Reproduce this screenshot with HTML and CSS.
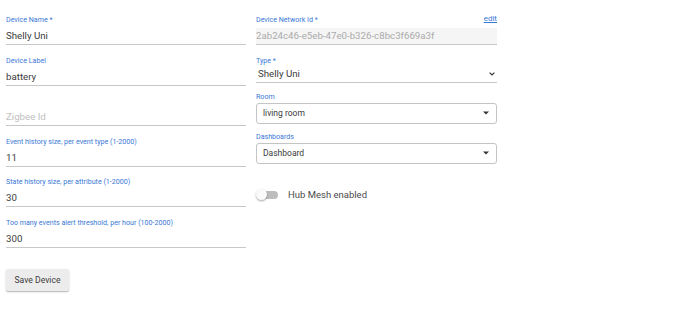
FILE: index.html
```html
<!DOCTYPE html>
<html lang="en">
  <head>
    <meta charset="UTF-8" />
    <title>Device Details</title>
    <link rel="stylesheet" href="styles.css">
  </head>
  <body>
    <div class="device-form">
      <div class="columns">
        <div class="col">
          <div class="field">
            <div class="label">Device Name *</div>
            <div class="value">Shelly Uni</div>
          </div>
          <div class="field">
            <div class="label">Device Label</div>
            <div class="value">battery</div>
          </div>
          <div class="field">
            <div class="label"></div>
            <div class="value placeholder">Zigbee Id</div>
          </div>
          <div class="field">
            <div class="label">Event history size, per event type (1-2000)</div>
            <div class="value">11</div>
          </div>
          <div class="field">
            <div class="label">State history size, per attribute (1-2000)</div>
            <div class="value">30</div>
          </div>
          <div class="field last-field">
            <div class="label">Too many events alert threshold, per hour (100-2000)</div>
            <div class="value">300</div>
          </div>
        </div>

        <div class="col">
          <div class="field">
            <div class="label label-row">
              <span>Device Network Id *</span>
              <a class="edit-link" href="#">edit</a>
            </div>
            <div class="value disabled">2ab24c46-e5eb-47e0-b326-c8bc3f669a3f</div>
          </div>
          <div class="field type-field">
            <div class="label">Type *</div>
            <div class="value value-select">
              <span>Shelly Uni</span>
              <svg class="chevron" width="6" height="4" viewBox="0 0 6 4">
                <path d="M0.6 0.6 L3 3 L5.4 0.6" fill="none" stroke="#333" stroke-width="1.2" />
              </svg>
            </div>
          </div>
          <div class="box-field room-field">
            <div class="label">Room</div>
            <div class="select-box">
              <span>living room</span>
              <svg class="caret" width="6" height="4" viewBox="0 0 6 4">
                <path d="M0 0.5 H6 L3 3.5 Z" fill="#333" />
              </svg>
            </div>
          </div>
          <div class="box-field dash-field">
            <div class="label">Dashboards</div>
            <div class="select-box">
              <span>Dashboard</span>
              <svg class="caret" width="6" height="4" viewBox="0 0 6 4">
                <path d="M0 0.5 H6 L3 3.5 Z" fill="#333" />
              </svg>
            </div>
          </div>
          <div class="switch-row">
            <div class="switch">
              <div class="switch-track"></div>
              <div class="switch-thumb"></div>
            </div>
            <span class="switch-label">Hub Mesh enabled</span>
          </div>
        </div>
      </div>

      <button class="save-button">Save Device</button>
    </div>
  </body>
</html>
```

FILE: styles.css
```css
body {
  margin: 0;
  font-family: Roboto, "Liberation Sans", sans-serif;
  background-color: #fff;
  color: #333;
}
.device-form {
  padding: 15px 6px;
}
.columns {
  display: grid;
  grid-template-columns: 240px 241px;
  column-gap: 10px;
}
.label {
  font-size: 7.1px;
  line-height: 10px;
  height: 10px;
  color: #3a78d6;
  white-space: nowrap;
}
.label-row {
  display: flex;
  justify-content: space-between;
  align-items: center;
}
.edit-link {
  font-size: 8px;
  color: #3a78d6;
  text-decoration: underline;
  margin-top: -3px;
}
.field {
  margin-bottom: 10.6px;
}
.last-field {
  margin-bottom: 0;
}
.value {
  margin-top: 3px;
  height: 16px;
  line-height: 16px;
  font-size: 9.7px;
  color: #3c3c3c;
  border-bottom: 1px solid #c8c8c8;
  white-space: nowrap;
}
.placeholder {
  color: #c0c0c0;
}
.disabled {
  background-color: #f5f5f5;
  color: #ababab;
}
.type-field {
  margin-bottom: 0;
}
.type-field .value {
  margin-top: 0;
}
.value-select {
  display: flex;
  justify-content: space-between;
  align-items: center;
  padding-left: 2px;
}
.chevron {
  margin-right: 2px;
}
.room-field {
  margin-top: 9px;
}
.dash-field {
  margin-top: 8px;
}
.box-field .label {
  margin-bottom: 1px;
}
.select-box {
  height: 19px;
  border: 1px solid #c4c4c4;
  border-radius: 3px;
  display: flex;
  justify-content: space-between;
  align-items: center;
  padding: 0 7px 0 6px;
  font-size: 8.5px;
  color: #3c3c3c;
}
.switch-row {
  margin-top: 21px;
  height: 20px;
  display: flex;
  align-items: center;
}
.switch {
  position: relative;
  width: 22px;
  height: 12px;
  margin-right: 10px;
}
.switch-track {
  position: absolute;
  left: 2px;
  top: 2px;
  width: 20px;
  height: 8px;
  border-radius: 4px;
  background-color: #bdbdbd;
}
.switch-thumb {
  position: absolute;
  left: 0;
  top: 0;
  width: 11px;
  height: 11px;
  border-radius: 50%;
  background-color: #fafafa;
  box-shadow: 0 1px 2px rgba(0, 0, 0, 0.35);
}
.switch-label {
  font-size: 9.5px;
  color: #4a4a4a;
}
.save-button {
  display: block;
  margin-top: 21px;
  width: 63px;
  height: 22px;
  padding: 0;
  border: none;
  border-radius: 2px;
  background-color: #ececec;
  box-shadow: 0 1px 1.5px rgba(0, 0, 0, 0.3);
  font-family: Roboto, "Liberation Sans", sans-serif;
  font-size: 8.6px;
  color: #3c3c3c;
  cursor: pointer;
}
```
